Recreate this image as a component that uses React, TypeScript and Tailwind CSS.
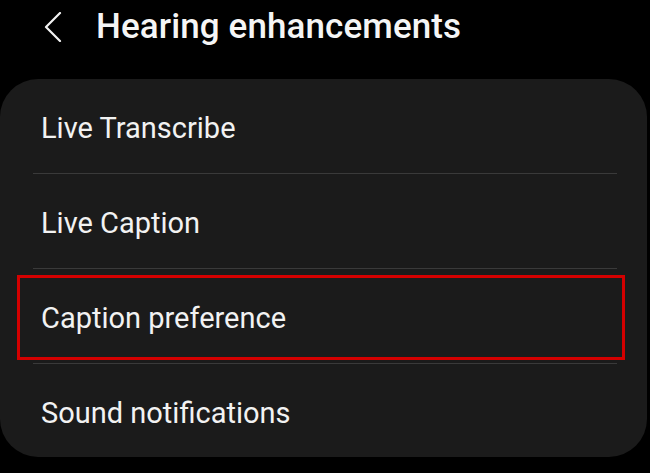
import React from "react";

const items = ["Live Transcribe", "Live Caption", "Caption preference", "Sound notifications"];

export default function App() {
  return (
    <div className="w-[650px] h-[473px] bg-black overflow-hidden font-['Roboto',sans-serif] text-white">
      <div className="h-[79px] flex items-start">
        <div className="pl-[44px] pt-[12px]">
          <svg width="18" height="30" viewBox="0 0 18 30" fill="none">
            <path d="M16 1 L2 15 L16 29" stroke="#f2f2f2" strokeWidth="2.2" strokeLinecap="round" strokeLinejoin="round" />
          </svg>
        </div>
        <div className="ml-[34px] mt-[4px] text-[35px] leading-[46px] font-medium tracking-[0.1px] text-[#f5f5f5]">
          Hearing enhancements
        </div>
      </div>
      <div className="relative w-[647px] h-[378px] rounded-[38px] bg-[#1b1b1b]">
        {items.map((t, i) => (
          <React.Fragment key={t}>
            {i > 0 && <div className="ml-[33px] mr-[30px] h-px bg-[#3a3a3a]" />}
            <div className="h-[94px] flex items-center pl-[41px] pt-[6px] text-[29px] text-[#f2f2f2]">{t}</div>
          </React.Fragment>
        ))}
        <div className="absolute left-[17px] top-[196px] w-[608px] h-[85px] border-[3px] border-[#d40000]" />
      </div>
    </div>
  );
}
